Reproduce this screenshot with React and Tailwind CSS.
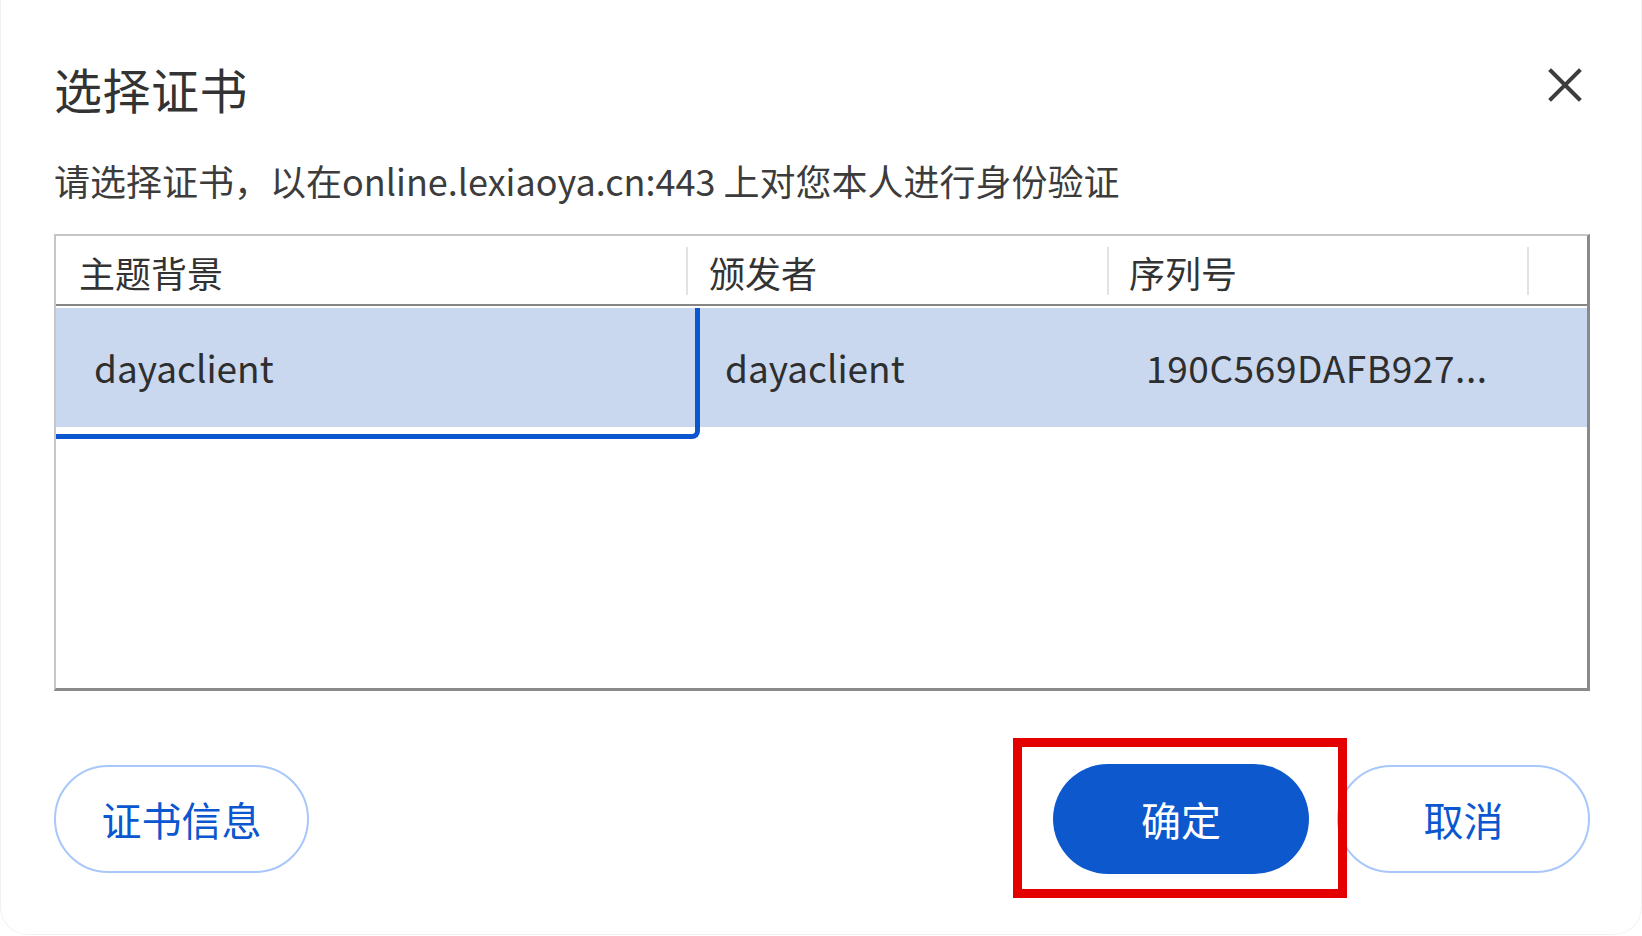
import React from 'react';

const FONT = { fontFamily: '"Noto Sans CJK SC", "Noto Sans", sans-serif' };

function CloseIcon() {
  return (
    <svg width="34" height="34" viewBox="0 0 34 34" className="block">
      <path d="M3 3 L31 31 M31 3 L3 31" stroke="#3d3d3d" strokeWidth="4" strokeLinecap="square" fill="none" />
    </svg>
  );
}

function HeaderCell({ label, pad }) {
  return (
    <div className="flex items-center justify-between h-full">
      <span className={`${pad} text-[36px] text-[#333] leading-none mt-[2px]`}>{label}</span>
      <div className="w-[2px] h-[48px] bg-[#e2e2e2]" />
    </div>
  );
}

export default function App() {
  return (
    <div className="w-[1642px] h-[936px] bg-white overflow-hidden" style={FONT}>
      <div className="h-[935px] bg-white rounded-b-[28px] border-b border-l border-r border-[#f2f2f2] pl-[53px] pr-[51px] pt-[60px] flex flex-col">
        {/* title */}
        <div className="h-[56px] flex items-center justify-between">
          <h1 className="text-[48px] leading-none text-[#333] tracking-[0.5px]">选择证书</h1>
          <div className="mr-[8px] -mt-[6px]">
            <CloseIcon />
          </div>
        </div>

        {/* subtitle */}
        <p className="mt-[40px] h-[48px] leading-[48px] text-[36px] text-[#3c3c3c] whitespace-nowrap">
          请选择证书，以在online.lexiaoya.cn:443 上对您本人进行身份验证
        </p>

        {/* certificate table */}
        <div className="mt-[30px] h-[457px] border-t-2 border-l-2 border-t-[#c6c6c6] border-l-[#c6c6c6] border-r-[3px] border-b-[3px] border-r-[#8a8a8a] border-b-[#8a8a8a] bg-white overflow-hidden">
          <div className="h-[70px] grid grid-cols-[632px_421px_420px_1fr] border-b-2 border-[#858585] pt-[2px]">
            <HeaderCell label="主题背景" pad="pl-[23px]" />
            <HeaderCell label="颁发者" pad="pl-[21px]" />
            <HeaderCell label="序列号" pad="pl-[20px]" />
            <div />
          </div>

          <div className="relative mt-[2px] h-[119px] bg-[#c9d8ef] grid grid-cols-[632px_421px_420px_1fr] items-center text-[37px] text-[#2e2e2e]">
            <span className="pl-[38px]">dayaclient</span>
            <span className="pl-[37px]">dayaclient</span>
            <span className="pl-[37px] whitespace-nowrap tracking-[0.6px]">190C569DAFB927...</span>
            <span />
            {/* keyboard focus ring on the first cell */}
            <div className="absolute left-[-6px] top-0 w-[650px] h-[131px] border-r-[5px] border-b-[5px] border-[#0b57d0] rounded-br-[8px]" />
          </div>
        </div>

        {/* actions */}
        <div className="mt-[73px] flex items-center">
          <button className="w-[255px] h-[108px] rounded-full border-2 border-[#a8c7fa] text-[40px] text-[#0b57d0] bg-white">
            证书信息
          </button>
          <div className="flex-1" />
          <div className="relative">
            <button className="w-[256px] h-[110px] rounded-full bg-[#0d58cd] text-[40px] text-white">
              确定
            </button>
            <div className="absolute left-[-40px] top-[-26px] w-[334px] h-[160px] border-[9px] border-[#e50000] z-10" />
          </div>
          <button className="ml-[28px] w-[253px] h-[108px] rounded-full border-2 border-[#a8c7fa] text-[40px] text-[#0b57d0] bg-white">
            取消
          </button>
        </div>
      </div>
    </div>
  );
}
